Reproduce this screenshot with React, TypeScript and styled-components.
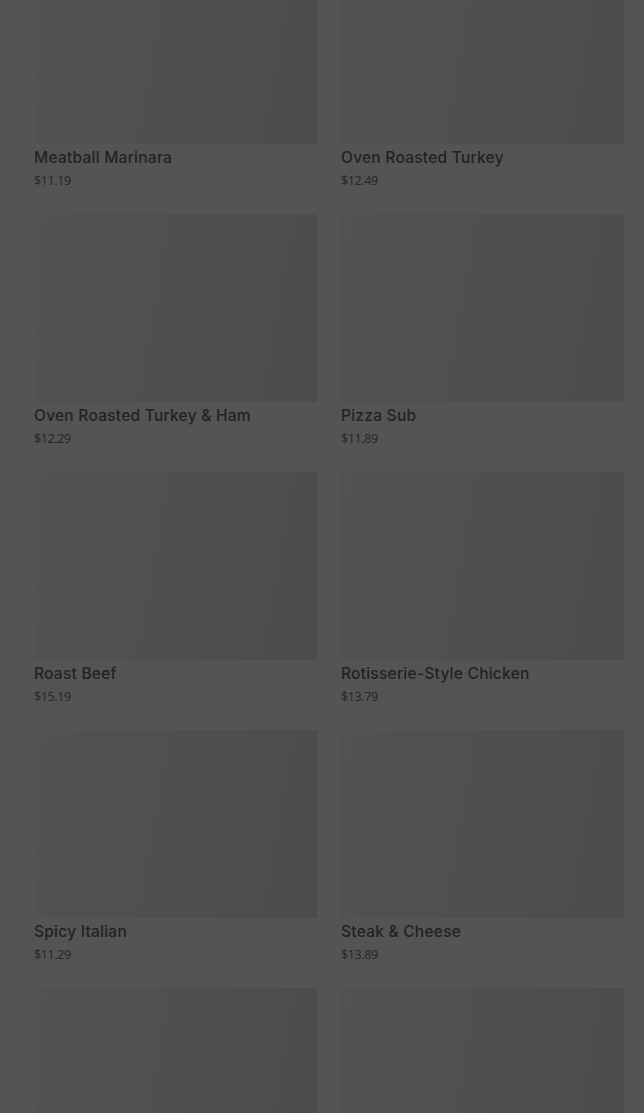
import React from "react";
import styled, { createGlobalStyle } from "styled-components";

const Global = createGlobalStyle`
  html, body { margin: 0; padding: 0; background: #545454; overflow: hidden; }
  body { font-family: "Inter", "Liberation Sans", sans-serif; }
`;

const Page = styled.div`
  width: 644px;
  height: 1113px;
  overflow: hidden;
  background: #545454;
`;

const Grid = styled.div`
  display: grid;
  grid-template-columns: 283px 283px;
  column-gap: 24px;
  padding: 0 20px 0 34px;
  margin-top: -44px;
`;

const Card = styled.div`
  display: flex;
  flex-direction: column;
  height: 258px;
`;

const Thumb = styled.div`
  height: 188px;
  background: linear-gradient(100deg, #525252 0%, #4f4f4f 50%, #4c4c4c 100%);
`;

const Name = styled.div`
  margin-top: 4px;
  font-family: "Inter", "Open Sans", sans-serif;
  font-size: 15.5px;
  font-weight: 500;
  line-height: 20px;
  color: #222222;
  letter-spacing: 0.25px;
`;

const Price = styled.div`
  margin-top: 5px;
  font-family: "Noto Sans", sans-serif;
  font-size: 12.5px;
  line-height: 16px;
  color: #282828;
  letter-spacing: -0.4px;
`;

const items = [
  ["Meatball Marinara", "$11.19"],
  ["Oven Roasted Turkey", "$12.49"],
  ["Oven Roasted Turkey & Ham", "$12.29"],
  ["Pizza Sub", "$11.89"],
  ["Roast Beef", "$15.19"],
  ["Rotisserie-Style Chicken", "$13.79"],
  ["Spicy Italian", "$11.29"],
  ["Steak & Cheese", "$13.89"],
  ["", ""],
  ["", ""],
];

export default function App() {
  return (
    <Page>
      <Global />
      <Grid>
        {items.map(([n, p], i) => (
          <Card key={i}>
            <Thumb />
            {n && <Name>{n}</Name>}
            {p && <Price>{p}</Price>}
          </Card>
        ))}
      </Grid>
    </Page>
  );
}
